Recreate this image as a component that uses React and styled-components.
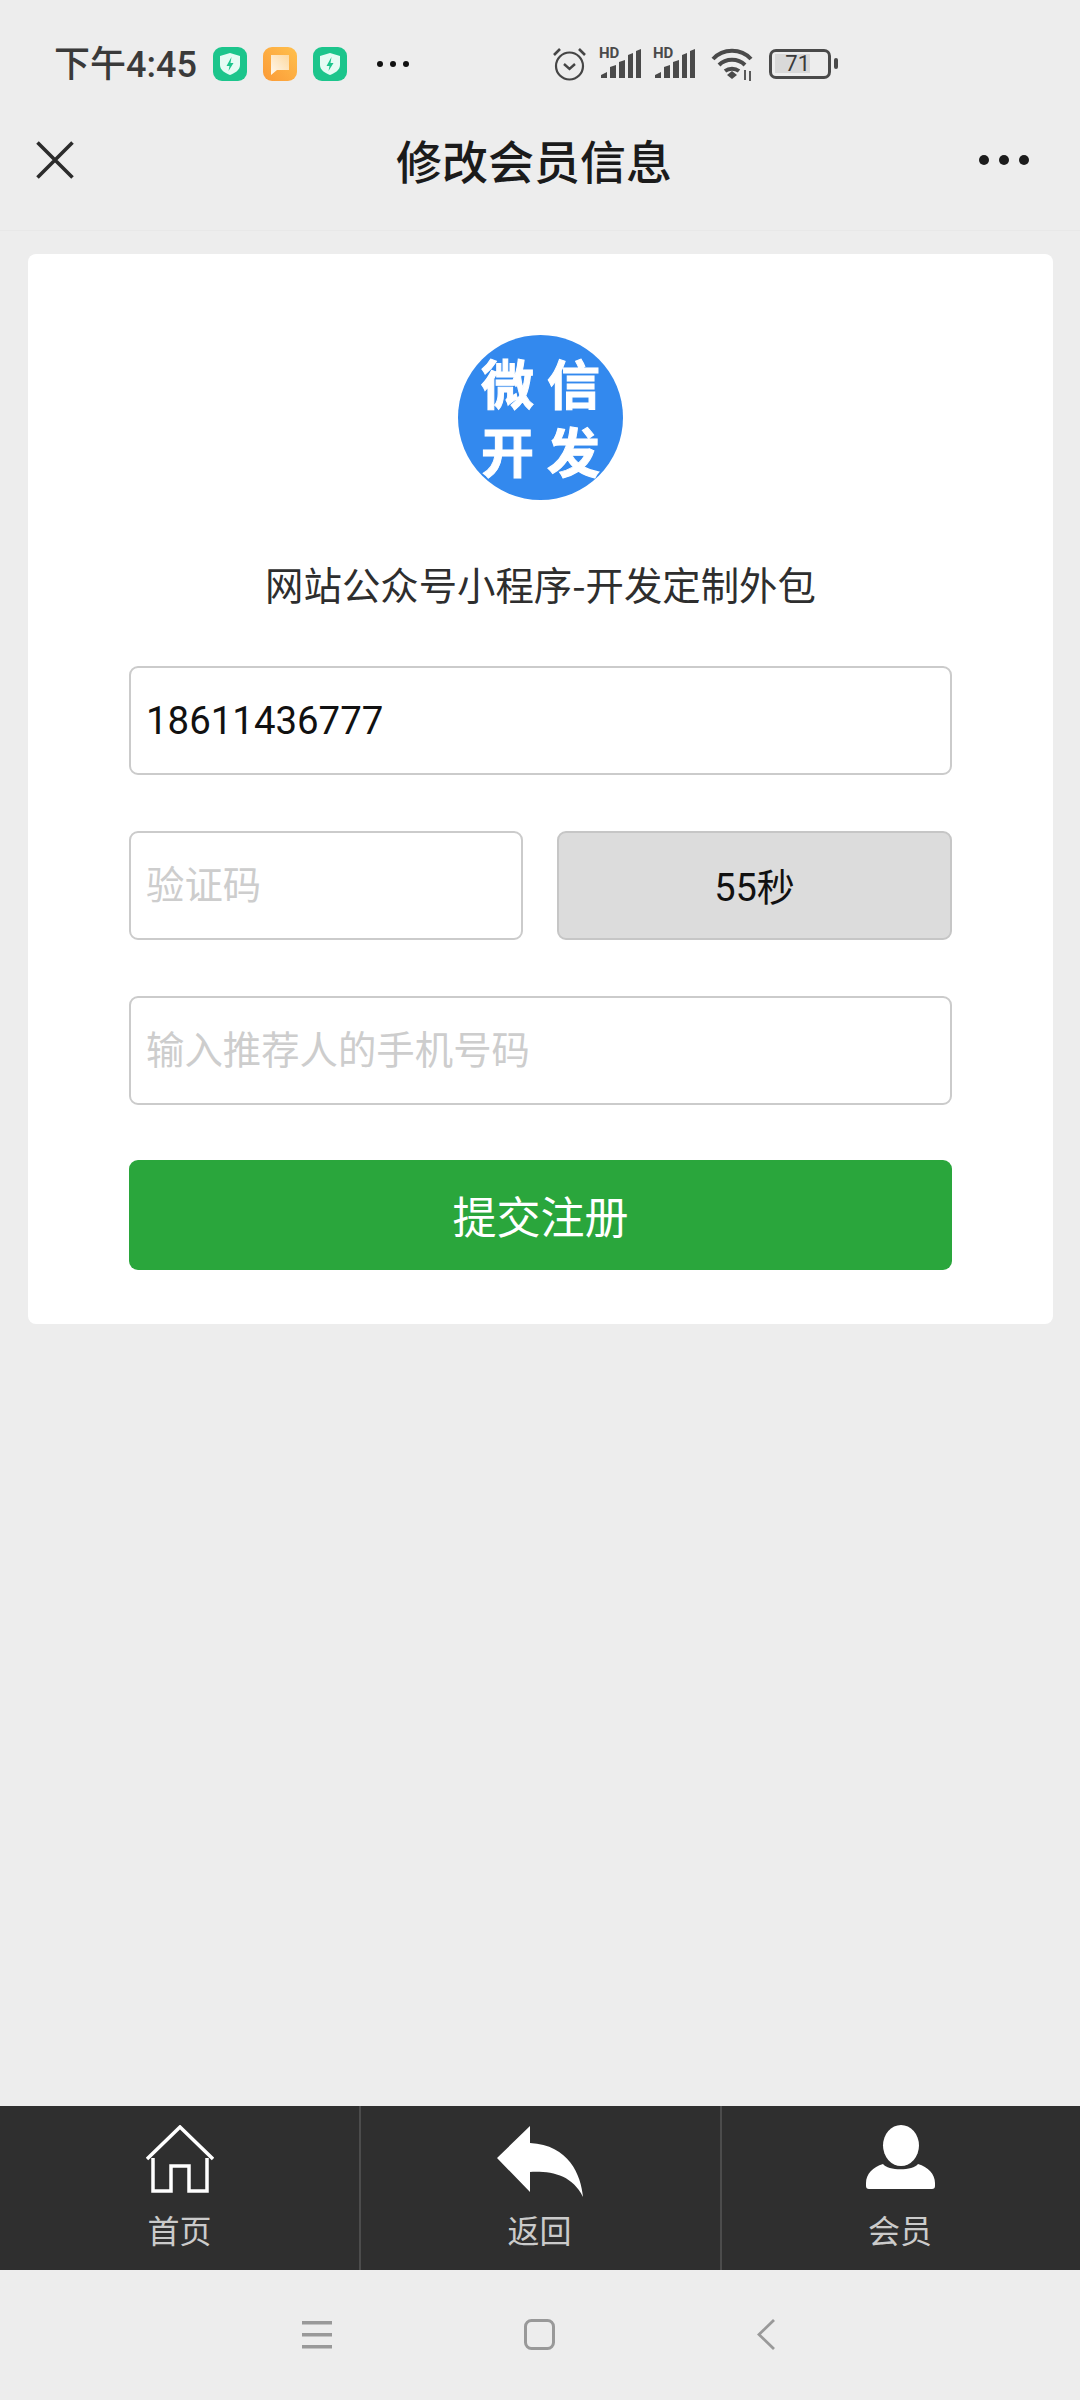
import React from 'react';
import styled, { createGlobalStyle } from 'styled-components';

const cjk = '"Noto Sans CJK SC", "Noto Sans", sans-serif';

const GlobalStyle = createGlobalStyle`
  html, body {
    margin: 0;
    padding: 0;
    background: #ededed;
  }
  * {
    box-sizing: border-box;
  }
`;

const Page = styled.div`
  width: 1080px;
  height: 2400px;
  display: flex;
  flex-direction: column;
  background: #ededed;
  font-family: ${cjk};
  overflow: hidden;
`;

const StatusBar = styled.div`
  height: 93px;
  padding: 47px 249px 0 54px;
  display: flex;
  align-items: flex-start;
  color: #3a3a3a;
`;

const Time = styled.span`
  width: 159px;
  height: 36px;
  font: 500 36px/36px Roboto, ${cjk};
  white-space: nowrap;
`;

const AppIcons = styled.div`
  display: flex;
  gap: 16px;
  margin-right: 30px;
`;

const StatusDots = styled.div`
  height: 34px;
  display: flex;
  align-items: center;
  gap: 7px;
`;

const SmallDot = styled.i`
  width: 6px;
  height: 6px;
  border-radius: 50%;
  background: #111;
`;

const SystemIcons = styled.div`
  margin-left: auto;
  display: flex;
  gap: 16px;
`;

const SignalGroup = styled.div`
  display: flex;
  gap: 12px;
`;

const SignalSvg = styled.svg`
  margin-top: -4px;
`;

const Header = styled.header`
  height: 138px;
  padding: 0 51px 4px 36px;
  display: grid;
  grid-template-columns: 1fr auto 1fr;
  align-items: center;
  border-bottom: 1px solid #e8e8e8;
`;

const Title = styled.h1`
  margin: 0 0 2px 3px;
  font: 500 46px/60px ${cjk};
  color: #1b1b1b;
  white-space: nowrap;
`;

const MoreDots = styled.div`
  justify-self: end;
  display: flex;
  gap: 10px;
`;

const MoreDot = styled.i`
  width: 10px;
  height: 10px;
  border-radius: 50%;
  background: #1c1c1c;
`;

const Main = styled.main`
  flex: 1;
  padding: 23px 27px 0 28px;
`;

const Card = styled.section`
  height: 1070px;
  padding: 81px 101px 54px;
  display: flex;
  flex-direction: column;
  align-items: center;
  background: #fff;
  border-radius: 8px;
`;

const Logo = styled.div`
  width: 165px;
  height: 165px;
  padding-bottom: 4px;
  border-radius: 50%;
  background: #3389ee;
  display: grid;
  grid-template-columns: 53px 53px;
  grid-auto-rows: 68px;
  column-gap: 13px;
  justify-content: center;
  align-content: center;
  color: #fff;
  font: 700 53px/68px ${cjk};
  -webkit-text-stroke: 1px #fff;
`;

const Slogan = styled.p`
  margin: 50px 0 0;
  height: 66px;
  font: 400 38.4px/66px ${cjk};
  color: #2e2e2e;
  white-space: nowrap;
`;

const Form = styled.form`
  width: 823px;
  margin-top: 50px;
  display: flex;
  flex-direction: column;
  gap: 56px;
`;

const CodeRow = styled.div`
  display: grid;
  grid-template-columns: 394px 395px;
  column-gap: 34px;
`;

const Field = styled.input`
  width: 100%;
  height: 109px;
  padding: 0 15px;
  border: 2px solid #cbcbcb;
  border-radius: 9px;
  background: #fff;
  color: #111;
  font: 400 38.4px Roboto, ${cjk};
  outline: none;

  &::placeholder {
    color: #cdcdcd;
    opacity: 1;
    font-family: ${cjk};
  }
`;

const CountDown = styled.button`
  height: 109px;
  padding: 0 0 2px;
  border: 2px solid #c6c6c6;
  border-radius: 9px;
  background: #dcdcdc;
  color: #111;
  font: 400 38px Roboto, ${cjk};
`;

const Submit = styled.button`
  height: 110px;
  margin-top: -1px;
  padding: 0;
  border: 0;
  border-radius: 9px;
  background: #2aa63c;
  color: #fff;
  font: 400 44px ${cjk};
`;

const TabBar = styled.nav`
  height: 164px;
  display: grid;
  grid-template-columns: 359px 361px 360px;
  background: #2f2f2f;
`;

const Tab = styled.a`
  height: 100%;
  display: flex;
  flex-direction: column;
  align-items: center;
  color: #cbcbcb;
  font: 400 32px/44px ${cjk};

  & + & {
    box-shadow: inset 2px 0 0 #4c4c4c;
  }

  svg {
    display: block;
  }
`;

const TabIcon = styled.span`
  height: 90px;
  padding-top: 19px;
  margin-bottom: 11px;
  display: block;
`;

const SystemNav = styled.div`
  flex: none;
  height: 130px;
  padding: 49px 0 50px 302px;
  display: grid;
  grid-template-columns: 222px 233px auto;
  align-items: center;
`;

const ShieldIcon = () => (
  <svg width="34" height="34" viewBox="0 0 34 34">
    <rect width="34" height="34" rx="9" fill="#1cc58c" />
    <path d="M17 6l10 3v9c0 5-5 8-10 10C12 26 7 23 7 18V9z" fill="#e6fbf4" />
    <path d="M18.500 10l-5 9h3l-1 5 5-8h-3z" fill="#1cc58c" />
  </svg>
);

const NoteIcon = () => (
  <svg width="34" height="34" viewBox="0 0 34 34">
    <defs>
      <linearGradient id="noteBg" x1="1" y1="0" x2="0" y2="1">
        <stop offset="0" stopColor="#ffc04d" />
        <stop offset="1" stopColor="#fb9a37" />
      </linearGradient>
      <linearGradient id="noteFg" x1="1" y1="0" x2="0" y2="1">
        <stop offset="0" stopColor="#fdd9a0" />
        <stop offset="1" stopColor="#fff8ee" />
      </linearGradient>
    </defs>
    <rect width="34" height="34" rx="9" fill="url(#noteBg)" />
    <path d="M8 8h18v15H14l-6 5z" fill="url(#noteFg)" />
  </svg>
);

const AlarmIcon = () => (
  <svg width="35" height="34" viewBox="0 0 35 34" fill="none" stroke="#454545">
    <circle cx="17.500" cy="19" r="13.500" strokeWidth="2.200" />
    <path d="M12 17l5.500 5 5.500-5" strokeWidth="2.400" />
    <path d="M2 8l6-6M33 8l-6-6" strokeWidth="2.600" />
  </svg>
);

const SignalIcon = () => (
  <SignalSvg width="42" height="36" viewBox="0 0 42 36">
    <text x="0" y="15" fontFamily="Roboto, sans-serif" fontWeight="700" fontSize="15" fill="#4a4a4a">
      HD
    </text>
    <path
      d="M2 35v-3l6-3v6zM11 35V24l6-2v13zM20 35V19l6-2v18zM29 35V12l5-2v25zM37 35V8l5-2v29z"
      fill="#4a4a4a"
    />
  </SignalSvg>
);

const WifiIcon = () => (
  <svg width="42" height="34" viewBox="0 0 42 34" fill="none" stroke="#4a4a4a" strokeWidth="4">
    <path d="M2 12C12 1 30 1 40 12" />
    <path d="M8 18c7-7 19-7 26 0" />
    <path d="M14 24c4-3 10-3 14 0" />
    <path d="M21 24l5 4-5 4-5-4z" fill="#4a4a4a" stroke="none" />
    <path d="M34 23v10M39 24v10" strokeWidth="1.800" />
  </svg>
);

const Battery = styled.div`
  position: relative;
  width: 62px;
  height: 30px;
  margin-top: 2px;
  border: 3.500px solid #4a4a4a;
  border-radius: 7px;
  color: #3a3a3a;
  font: 400 22px/19px Roboto, sans-serif;

  &::after {
    content: '';
    position: absolute;
    right: -10px;
    top: 6px;
    width: 4px;
    height: 11px;
    border-radius: 2px;
    background: #4a4a4a;
  }
`;

const BatteryFill = styled.span`
  display: block;
  width: 35px;
  height: 19px;
  margin: 2px 0 0 3px;
  background: #d9d9d9;
  text-align: right;
`;

const CloseIcon = () => (
  <svg width="38" height="38" viewBox="0 0 38 38" stroke="#2b2b2b" strokeWidth="3.600">
    <path d="M1.500 1.500l35 35M36.500 1.500l-35 35" />
  </svg>
);

const HomeIcon = () => (
  <svg width="68" height="70" viewBox="0 0 68 70" fill="none" stroke="#fff" strokeWidth="3.500">
    <path d="M1 34L34 2l33 32" />
    <path d="M7 33v33h18V41h18v25h18V33" />
  </svg>
);

const ReplyIcon = () => (
  <svg width="86" height="72" viewBox="0 0 86 72" fill="#fff">
    <path d="M33 1L0 33l33 34V47c22-1 42 3 53 25C84 50 72 20 33 18z" />
  </svg>
);

const PersonIcon = () => (
  <svg width="69" height="64" viewBox="0 0 69 64" fill="#fff">
    <ellipse cx="35" cy="20.500" rx="18" ry="20.500" />
    <path d="M0 58c0-9 7-16 17-19 5 7 30 7 35 0 10 3 17 10 17 19v3c0 2-1 3-3 3H3c-2 0-3-1-3-3z" />
  </svg>
);

const MenuKey = () => (
  <svg width="30" height="28" viewBox="0 0 30 28" fill="#999">
    <path d="M0 0h30v3.500H0zM0 12h30v3.500H0zM0 24h30v3.500H0z" />
  </svg>
);

const HomeKey = () => (
  <svg width="31" height="31" viewBox="0 0 31 31" fill="none" stroke="#999" strokeWidth="3">
    <rect x="1.500" y="1.500" width="28" height="28" rx="6" />
  </svg>
);

const BackKey = () => (
  <svg width="18" height="31" viewBox="0 0 18 31" fill="none" stroke="#999" strokeWidth="2.800">
    <path d="M17 1L2 15.500 17 30" />
  </svg>
);

const tabs = [
  { label: '首页', icon: <HomeIcon /> },
  { label: '返回', icon: <ReplyIcon /> },
  { label: '会员', icon: <PersonIcon /> },
];

export default function App() {
  return (
    <Page>
      <GlobalStyle />
      <StatusBar>
        <Time>下午4:45</Time>
        <AppIcons>
          <ShieldIcon />
          <NoteIcon />
          <ShieldIcon />
        </AppIcons>
        <StatusDots>
          <SmallDot />
          <SmallDot />
          <SmallDot />
        </StatusDots>
        <SystemIcons>
          <SignalGroup>
            <AlarmIcon />
            <SignalIcon />
            <SignalIcon />
          </SignalGroup>
          <WifiIcon />
          <Battery>
            <BatteryFill>71</BatteryFill>
          </Battery>
        </SystemIcons>
      </StatusBar>
      <Header>
        <CloseIcon />
        <Title>修改会员信息</Title>
        <MoreDots>
          <MoreDot />
          <MoreDot />
          <MoreDot />
        </MoreDots>
      </Header>
      <Main>
        <Card>
          <Logo>
            <span>微</span>
            <span>信</span>
            <span>开</span>
            <span>发</span>
          </Logo>
          <Slogan>网站公众号小程序-开发定制外包</Slogan>
          <Form>
            <Field value="18611436777" readOnly />
            <CodeRow>
              <Field placeholder="验证码" readOnly />
              <CountDown type="button">55秒</CountDown>
            </CodeRow>
            <Field placeholder="输入推荐人的手机号码" readOnly />
            <Submit type="button">提交注册</Submit>
          </Form>
        </Card>
      </Main>
      <TabBar>
        {tabs.map((tab) => (
          <Tab key={tab.label}>
            <TabIcon>{tab.icon}</TabIcon>
            {tab.label}
          </Tab>
        ))}
      </TabBar>
      <SystemNav>
        <MenuKey />
        <HomeKey />
        <BackKey />
      </SystemNav>
    </Page>
  );
}
